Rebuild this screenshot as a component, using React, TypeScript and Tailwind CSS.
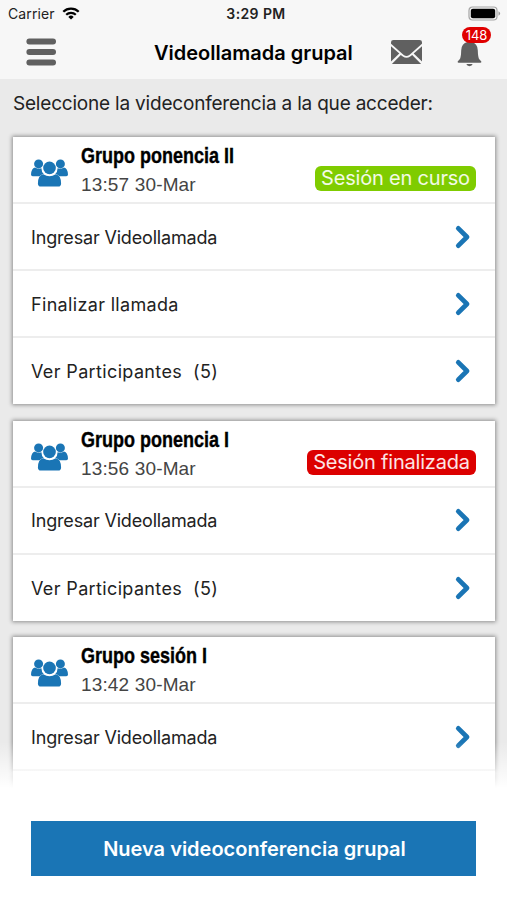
type Action = { label: string; className: string }

type Session = {
  title: string
  date: string
  badge?: { label: string; className: string }
  actions: Action[]
}

const enter: Action = { label: 'Ingresar Videollamada', className: 'tracking-[-0.17px]' }
const finish: Action = { label: 'Finalizar llamada', className: 'tracking-[0.33px]' }
const participants: Action = { label: 'Ver Participantes  (5)', className: 'tracking-[0.36px]' }

const sessions: Session[] = [
  {
    title: 'Grupo ponencia II',
    date: '13:57 30-Mar',
    badge: { label: 'Sesión en curso', className: 'bg-[#7fcc00] w-[161px]' },
    actions: [enter, finish, participants],
  },
  {
    title: 'Grupo ponencia I',
    date: '13:56 30-Mar',
    badge: { label: 'Sesión finalizada', className: 'bg-[#dc0000] w-[169px]' },
    actions: [enter, participants],
  },
  {
    title: 'Grupo sesión I',
    date: '13:42 30-Mar',
    actions: [enter],
  },
]

function WifiIcon() {
  return (
    <svg className="ml-[7px] h-[13px] w-[18px]" viewBox="0 0 18 13" fill="none" stroke="#000">
      <path d="M1.3 4.7a11 11 0 0 1 15.4 0" strokeWidth="2.3" />
      <path d="M4.2 7.8a6.9 6.9 0 0 1 9.6 0" strokeWidth="2.2" />
      <path d="M9 12.6 6.3 9.9a3.9 3.9 0 0 1 5.4 0z" fill="#000" stroke="none" />
    </svg>
  )
}

function BatteryIcon() {
  return (
    <svg className="h-[15px] w-[33px]" viewBox="0 0 33 15">
      <rect x="1" y="1" width="28" height="13" rx="3.5" fill="#f7f7f7" stroke="#a5a5a5" strokeWidth="1.2" />
      <rect x="2.8" y="2.8" width="24.4" height="9.4" rx="2" fill="#000" />
      <path d="M30.5 5.3q1.6.7 1.6 2.2t-1.6 2.2z" fill="#999" />
    </svg>
  )
}

function MenuIcon() {
  return (
    <svg className="mb-[3px] h-7 w-[30px]" viewBox="0 0 30 28" fill="#606060">
      <rect x="0.4" y="0.6" width="29.6" height="6" rx="3" />
      <rect x="0.4" y="11" width="29.6" height="6" rx="3" />
      <rect x="0.4" y="21.4" width="29.6" height="6" rx="3" />
    </svg>
  )
}

function MailIcon() {
  return (
    <svg className="h-6 w-[31px]" viewBox="0 0 31 24" fill="#606060">
      <path d="M2.5 0h26Q31 0 31 2.2v1.6L18.3 14.9q-2.8 2-5.6 0L0 3.8V2.2Q0 0 2.5 0z" />
      <path d="M0 6.3 8.3 13.6 0 21.6z" />
      <path d="M31 6.3 22.7 13.6 31 21.6z" />
      <path d="M9.8 14.9l2 1.7q3.7 2.4 7.4 0l2-1.7 8.9 9.1H.9z" />
    </svg>
  )
}

function BellIcon() {
  return (
    <svg className="h-[27px] w-[25px]" viewBox="0 0 25 28" fill="#606060">
      <path d="M12.5 0q1.8 0 2 2.1 6.3 1.5 6.6 8.4.2 7.7 1.6 9.4.7.9 2 2.1.4 1.6-1 1.7H1.3Q-.1 23.6.3 22q1.3-1.2 2-2.1 1.4-1.7 1.6-9.4.3-6.9 6.6-8.4.2-2.1 2-2.1z" />
      <path d="M9.2 24.9h6.6q-.7 2.2-3.3 2.2t-3.3-2.2z" />
    </svg>
  )
}

function GroupIcon() {
  return (
    <svg className="h-7 w-[37px] shrink-0" viewBox="0 0 37 28" fill="#1a75b5">
      <circle cx="7.6" cy="4.9" r="4.5" />
      <circle cx="29.4" cy="4.9" r="4.5" />
      <path d="M4 8.4Q.2 9.5 0 15.5q0 1.7 1.7 1.7h6.8q2-1.6 4.2-2.2-2.2-2-2.3-5.7Q7.5 10.6 4 8.4z" />
      <path d="M33 8.4q3.8 1.1 4 7.1 0 1.7-1.7 1.7h-6.8q-2-1.6-4.2-2.2 2.2-2 2.3-5.7 2.9 1.3 6.4-.9z" />
      <circle cx="18.5" cy="8.9" r="7.1" fill="#fff" />
      <circle cx="18.5" cy="8.9" r="6.3" />
      <path d="M12.3 15.2q6.2 4.2 12.4 0 5.4 1 5.4 9.3 0 3.1-3 3.1H9.9q-3 0-3-3.1 0-8.3 5.4-9.3z" />
    </svg>
  )
}

function ChevronIcon() {
  return (
    <svg className="h-6 w-[17px]" viewBox="0 0 17 24" fill="none" stroke="#1a75b5" strokeWidth="4.8" strokeLinecap="round" strokeLinejoin="round">
      <path d="M4.3 3.4 13 12l-8.7 8.600" />
    </svg>
  )
}

function SessionCard({ title, date, badge, actions }: Session) {
  return (
    <article className="bg-white shadow-[0_0_4px_1px_rgba(0,0,0,0.4)]">
      <header className="flex h-[67px] border-b-2 border-[#ededed] pr-[19px] pl-[18px]">
        <div className="pt-[22px]">
          <GroupIcon />
        </div>
        <div className="ml-[13px] flex-1 pt-[6px] font-['Liberation_Sans',sans-serif]">
          <h2 className="origin-left scale-x-[0.8] text-[22.5px] leading-[26px] font-bold whitespace-nowrap text-black [-webkit-text-stroke:0.4px_black]">
            {title}
          </h2>
          <p className="mt-[3px] text-[19px] leading-[26px] tracking-[0.15px] whitespace-nowrap text-[#444]">{date}</p>
        </div>
        {badge && (
          <span className={`mt-[29px] h-[25px] rounded-[6px] text-center text-[20px] leading-[25px] tracking-[-0.2px] whitespace-nowrap text-white/90 ${badge.className}`}>
            {badge.label}
          </span>
        )}
      </header>
      <ul>
        {actions.map((action) => (
          <li key={action.label} className="flex h-[67px] items-center justify-between border-b-2 border-[#ededed] pr-[24px] pl-[18px] last:h-[66px] last:border-b-0 only:h-[67px] only:border-b-2">
            <span className={`pt-px text-[18px] whitespace-pre text-[#222] ${action.className}`}>{action.label}</span>
            <ChevronIcon />
          </li>
        ))}
      </ul>
    </article>
  )
}

export default function App() {
  return (
    <div className="flex h-[900px] w-[507px] flex-col overflow-hidden bg-white font-['Inter',sans-serif]">
      <div className="h-[79px] shrink-0 bg-[#f7f7f7]">
        <div className="grid h-[27px] grid-cols-3 items-center pr-[6px] pl-2 text-[14px] text-[#222]">
          <div className="flex items-center">
            <span className="tracking-[0.1px]">Carrier</span>
            <WifiIcon />
          </div>
          <div className="pl-[3px] text-center font-semibold tracking-[0.4px]">3:29 PM</div>
          <div className="flex justify-end">
            <BatteryIcon />
          </div>
        </div>
        <div className="flex h-[52px] items-center pr-[24px] pl-[26px]">
          <MenuIcon />
          <h1 className="ml-[98px] w-[200px] text-[20px] font-semibold whitespace-nowrap text-black">Videollamada grupal</h1>
          <div className="ml-[37px] pb-[3px]">
            <MailIcon />
          </div>
          <div className="relative ml-[35px]">
            <BellIcon />
            <span className="absolute -top-[13px] left-[5px] h-4 w-[29px] rounded-full bg-[#e00000] text-center text-[13px] leading-4 text-white">148</span>
          </div>
        </div>
      </div>

      <main className="relative h-[717px] shrink-0 overflow-hidden bg-[#eaeaea] px-[13px]">
        <p className="h-[58px] pt-[11px] text-[19px] leading-[28px] tracking-[-0.2px] whitespace-nowrap text-[#222]">
          Seleccione la videconferencia a la que acceder:
        </p>
        <div className="w-[482px] space-y-[16.5px]">
          {sessions.map((session) => (
            <SessionCard key={session.title} {...session} />
          ))}
        </div>
        <div className="h-12 w-[482px] bg-white shadow-[0_4px_4px_1px_rgba(0,0,0,0.4)]" />
        <div className="absolute inset-x-0 bottom-0 h-[54px] bg-linear-to-b from-white/0 to-white to-85%" />
      </main>

      <footer className="px-[31px] pt-[25px]">
        <button className="h-[55px] w-[445px] bg-[#1a75b5] pl-[2px] text-[20px] font-semibold text-white">Nueva videoconferencia grupal</button>
      </footer>
    </div>
  )
}
